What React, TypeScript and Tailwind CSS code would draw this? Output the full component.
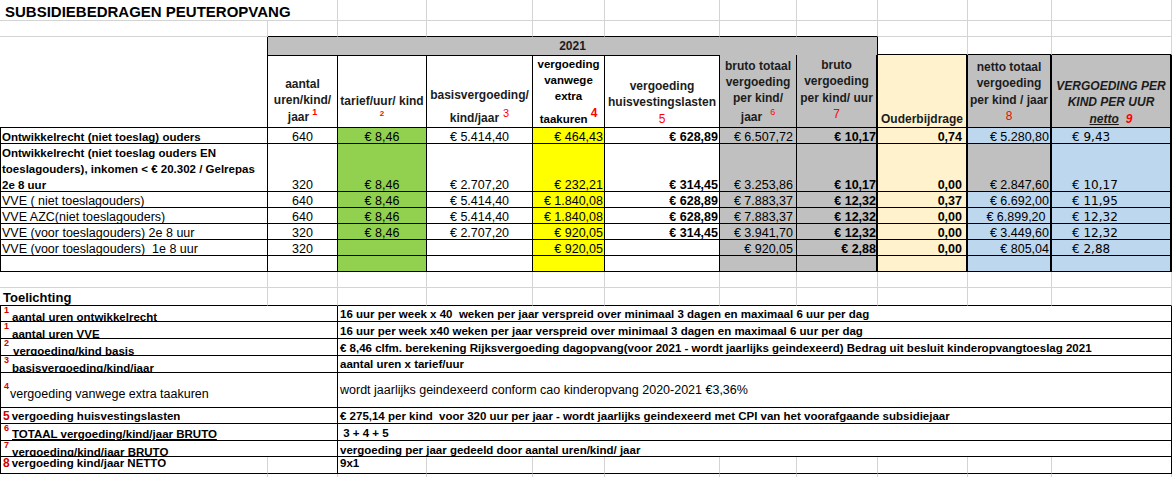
import React from "react";

const COLS =
  "grid grid-cols-[268px_70px_89px_106px_72px_115px_77px_81px_90px_84px_120px]";

const GRID = "border-r border-b border-[#d4d4d4]";
const RED = "text-[#ff0000]";

type DataRow = {
  a: React.ReactNode;
  bold?: boolean;
  h: string;
  jGray?: boolean;
  vals: string[];
};

const dataRows: DataRow[] = [
  {
    a: "Ontwikkelrecht (niet toeslag) ouders",
    bold: true,
    h: "h-[16px]",
    vals: ["640", "€ 8,46", "€ 5.414,40", "€ 464,43", "€ 628,89", "€ 6.507,72", "€ 10,17", "0,74", "€ 5.280,80", "€ 9,43"],
  },
  {
    a: (
      <>
        Ontwikkelrecht (niet toeslag ouders EN
        <br />
        toeslagouders), inkomen &lt; € 20.302 / Gelrepas
        <br />
        2e 8 uur
      </>
    ),
    bold: true,
    h: "h-[48px]",
    jGray: true,
    vals: ["320", "€ 8,46", "€ 2.707,20", "€ 232,21", "€ 314,45", "€ 3.253,86", "€ 10,17", "0,00", "€ 2.847,60", "€ 10,17"],
  },
  {
    a: "VVE ( niet toeslagouders)",
    h: "h-[16px]",
    vals: ["640", "€ 8,46", "€ 5.414,40", "€ 1.840,08", "€ 628,89", "€ 7.883,37", "€ 12,32", "0,37", "€ 6.692,00", "€ 11,95"],
  },
  {
    a: "VVE AZC(niet toeslagouders)",
    h: "h-[16px]",
    vals: ["640", "€ 8,46", "€ 5.414,40", "€ 1.840,08", "€ 628,89", "€ 7.883,37", "€ 12,32", "0,00", "€ 6.899,20\u00a0", "€ 12,32"],
  },
  {
    a: "VVE (voor toeslagouders) 2e 8 uur",
    h: "h-[16px]",
    vals: ["320", "€ 8,46", "€ 2.707,20", "€ 920,05", "€ 314,45", "€ 3.941,70", "€ 12,32", "0,00", "€ 3.449,60", "€ 12,32"],
  },
  {
    a: "VVE (voor toeslagouders)  1e 8 uur",
    h: "h-[16px]",
    vals: ["320", "", "", "€ 920,05", "", "€ 920,05", "€ 2,88", "0,00", "€ 805,04", "€ 2,88"],
  },
  {
    a: "",
    h: "h-[16px]",
    vals: ["", "", "", "", "", "", "", "", "", ""],
  },
];

// per column styles for B..K in the data block
const dataCols = (jGray?: boolean) => [
  "justify-center",
  "justify-center bg-[#92d050]",
  "justify-center",
  "justify-end pr-[1px] bg-[#ffff00]",
  "justify-end pr-[1px] font-bold",
  "justify-end pr-[3px] bg-[#c0c0c0]",
  "justify-end bg-[#c0c0c0] font-bold border-r-2",
  "justify-end pr-[4px] bg-[#fff2cc] font-bold border-r-2",
  jGray
    ? "justify-end pr-[1px] bg-[#c0c0c0] border-r-2"
    : "justify-end pr-[1px] bg-[#bdd7ee] border-r-2",
  "justify-start pl-[20px] bg-[#bdd7ee] border-r-2 font-['DejaVu_Sans',sans-serif] text-[12px]",
];

const Sup = ({ n, cls = "" }: { n: string; cls?: string }) => (
  <span
    className={`self-start ml-[3px] w-[6px] text-[9px] leading-[9px] font-bold text-[#d00000] ${cls}`}
  >
    {n}
  </span>
);

const NoteText = ({ children, cls = "" }: { children: React.ReactNode; cls?: string }) => (
  <span className={`text-[11.5px] font-bold leading-[12px] ${cls}`}>{children}</span>
);

const NoteRow = ({
  h,
  left,
  leftCls,
  right,
  rightCls,
}: {
  h: string;
  left: React.ReactNode;
  leftCls: string;
  right: React.ReactNode;
  rightCls: string;
}) => (
  <div className={`grid grid-cols-[338px_834px] ${h}`}>
    <div
      className={`flex overflow-hidden whitespace-pre border-l border-r border-b border-black ${leftCls}`}
    >
      {left}
    </div>
    <div
      className={`flex overflow-hidden whitespace-pre border-r border-b border-black pl-[2px] ${rightCls}`}
    >
      {right}
    </div>
  </div>
);

export default function App() {
  return (
    <div className="w-[1174px] h-[477px] overflow-hidden bg-white text-black font-['Liberation_Sans',Arial,sans-serif]">
      {/* TITLE */}
      <div className={`${COLS} h-[21px]`}>
        <div className="col-span-2 flex items-end pl-[5px] border-r border-b border-[#d4d4d4] whitespace-nowrap text-[15px] font-bold leading-[17px]">
          SUBSIDIEBEDRAGEN PEUTEROPVANG
        </div>
        {Array.from({ length: 9 }).map((_, i) => (
          <div key={i} className={GRID} />
        ))}
      </div>

      {/* EMPTY ROW */}
      <div className={`${COLS} h-[16px]`}>
        <div className={GRID} />
        {Array.from({ length: 7 }).map((_, i) => (
          <div key={i} className="border-r border-b border-r-[#d4d4d4] border-b-black" />
        ))}
        {Array.from({ length: 3 }).map((_, i) => (
          <div key={i} className={GRID} />
        ))}
      </div>

      {/* 2021 BAND */}
      <div className={`${COLS} h-[18px]`}>
        <div className="border-r border-black" />
        <div className="col-span-7 flex items-center justify-center bg-[#c0c0c0] border-r border-b border-black text-[12px] font-bold text-[#1c1c1c]">
          2021
        </div>
        {Array.from({ length: 3 }).map((_, i) => (
          <div key={i} className="border-r border-b-2 border-r-[#d4d4d4] border-b-black" />
        ))}
      </div>

      {/* HEADER */}
      <div className={`${COLS} h-[73px] text-[12px] font-bold leading-[16.5px] text-[#1c1c1c] whitespace-nowrap`}>
        <div className="border-r border-b border-black" />

        <div className="flex flex-col items-center justify-end pb-[2px] text-center border-r border-b border-black">
          <div>aantal</div>
          <div>uren/kind/</div>
          <div>
            jaar
            <span className={`relative -top-[6px] ml-[3px] text-[9px] leading-none ${RED}`}>1</span>
          </div>
        </div>

        <div className="flex flex-col items-center justify-end pb-[8px] text-center border-r border-b border-black">
          <div>tarief/uur/ kind</div>
          <div className={`text-[8px] leading-[10px] ${RED}`}>2</div>
        </div>

        <div className="flex flex-col items-center justify-end pb-[1px] text-center border-r border-b border-black">
          <div>basisvergoeding/</div>
          <div className="mt-[6.5px]">
            kind/jaar
            <span className={`relative -top-[5px] ml-[4px] text-[11px] leading-none font-normal ${RED}`}>3</span>
          </div>
        </div>

        <div className="flex flex-col items-center justify-end text-center border-r border-b border-black text-[11.5px] leading-[16px] text-black">
          <div>vergoeding</div>
          <div>vanwege</div>
          <div>extra</div>
          <div className="mt-[7px]">
            taakuren
            <span className={`relative -top-[6px] ml-[3px] text-[12px] leading-none ${RED}`}>4</span>
          </div>
        </div>

        <div className="flex flex-col items-center justify-end text-center border-r border-b border-black">
          <div>vergoeding</div>
          <div>huisvestingslasten</div>
          <div className={`font-normal ${RED}`}>5</div>
        </div>

        <div className="flex flex-col items-center justify-end pb-[2px] text-center bg-[#c0c0c0] border-r border-b border-black leading-[16px]">
          <div>bruto totaal</div>
          <div>vergoeding</div>
          <div>per kind/</div>
          <div className="mt-[3px] leading-[16.5px]">
            jaar
            <span className={`relative -top-[6px] ml-[8px] text-[9px] leading-none font-normal ${RED}`}>6</span>
          </div>
        </div>

        <div className="flex flex-col items-center justify-center pb-[3px] text-center bg-[#c0c0c0] border-r-2 border-b border-black">
          <div>bruto</div>
          <div>vergoeding</div>
          <div>per kind/ uur</div>
          <div className={`font-normal ${RED}`}>7</div>
        </div>

        <div className="flex flex-col items-center justify-end text-center bg-[#fff2cc] border-r-2 border-b border-black">
          <div>Ouderbijdrage</div>
        </div>

        <div className="flex flex-col items-center justify-center pt-[1px] text-center bg-[#c0c0c0] border-r-2 border-b border-black">
          <div>netto totaal</div>
          <div>vergoeding</div>
          <div>per kind / jaar</div>
          <div className={`font-normal ${RED}`}>8</div>
        </div>

        <div className="flex flex-col items-center justify-end text-center italic bg-[#c0c0c0] border-r-2 border-b border-black">
          <div>VERGOEDING PER</div>
          <div>KIND PER UUR</div>
          <div>
            <span className="underline">netto</span>
            <span className={`ml-[7px] ${RED}`}>9</span>
          </div>
        </div>
      </div>

      {/* DATA */}
      {dataRows.map((row, r) => (
        <div key={r} className={`${COLS} ${row.h} text-[12.5px]`}>
          <div className="flex items-end overflow-hidden whitespace-pre pl-[1px] border-l border-r border-b border-black">
            <span
              className={
                row.bold
                  ? "text-[11.5px] font-bold leading-[16px] -mb-[2px]"
                  : "leading-[16px] -mb-[2px]"
              }
            >
              {row.a}
            </span>
          </div>
          {dataCols(row.jGray).map((cls, c) => (
            <div
              key={c}
              className={`flex items-end overflow-hidden whitespace-pre border-r border-b border-black ${cls}`}
            >
              <span className="leading-[16px] -mb-[2px]">{row.vals[c]}</span>
            </div>
          ))}
        </div>
      ))}

      {/* EMPTY ROW */}
      <div className={`${COLS} h-[16px]`}>
        {Array.from({ length: 11 }).map((_, i) => (
          <div key={i} className={GRID} />
        ))}
      </div>

      {/* TOELICHTING */}
      <div className={`${COLS} h-[18px]`}>
        <div className="flex items-end pl-[3px] border-r border-b border-r-[#d4d4d4] border-b-black text-[13px] font-bold leading-[14px]">
          Toelichting
        </div>
        {Array.from({ length: 10 }).map((_, i) => (
          <div key={i} className="border-r border-b border-r-[#d4d4d4] border-b-black" />
        ))}
      </div>

      <NoteRow
        h="h-[16px]"
        leftCls="items-end"
        left={
          <>
            <Sup n="1" />
            <NoteText cls="ml-[2px] -mb-[2px]">aantal uren ontwikkelrecht</NoteText>
          </>
        }
        rightCls="items-end pb-[1px]"
        right={
          <NoteText>
            16 uur per week x 40  weken per jaar verspreid over minimaal 3 dagen en maximaal 6 uur per dag
          </NoteText>
        }
      />
      <NoteRow
        h="h-[17px]"
        leftCls="items-end"
        left={
          <>
            <Sup n="1" />
            <NoteText cls="ml-[2px] -mb-[2px]">aantal uren VVE</NoteText>
          </>
        }
        rightCls="items-end pb-[1px]"
        right={
          <NoteText>
            16 uur per week x40 weken per jaar verspreid over minimaal 3 dagen en maximaal 6 uur per dag
          </NoteText>
        }
      />
      <NoteRow
        h="h-[17px]"
        leftCls="items-end"
        left={
          <>
            <Sup n="2" />
            <NoteText cls="ml-[3px] -mb-[2px]">vergoeding/kind basis</NoteText>
          </>
        }
        rightCls="items-end pb-[1px]"
        right={
          <NoteText>
            € 8,46 clfm. berekening Rijksvergoeding dagopvang(voor 2021 - wordt jaarlijks geindexeerd) Bedrag uit besluit kinderopvangtoeslag 2021
          </NoteText>
        }
      />
      <NoteRow
        h="h-[17px]"
        leftCls="items-end"
        left={
          <>
            <Sup n="3" />
            <NoteText cls="ml-[2px] -mb-[2px]">basisvergoeding/kind/jaar</NoteText>
          </>
        }
        rightCls="items-end pb-[2px]"
        right={<NoteText>aantal uren x tarief/uur</NoteText>}
      />
      <NoteRow
        h="h-[35px]"
        leftCls="items-end pb-[5px]"
        left={
          <>
            <Sup n="4" cls="mt-[9px] text-[8px] leading-[8px]" />
            <span className="text-[12.5px] leading-[16px]">vergoeding vanwege extra taakuren</span>
          </>
        }
        rightCls="items-center"
        right={
          <span className="text-[12.5px] leading-[16px]">
            wordt jaarlijks geindexeerd conform cao kinderopvang 2020-2021 €3,36%
          </span>
        }
      />
      <NoteRow
        h="h-[16px]"
        leftCls="items-end pb-[1px]"
        left={
          <NoteText>
            <span className="ml-[2px] mr-[2px] text-[12px] text-[#d00000]">5</span>
            vergoeding huisvestingslasten
          </NoteText>
        }
        rightCls="items-end pb-[1px]"
        right={
          <NoteText>
            € 275,14 per kind  voor 320 uur per jaar - wordt jaarlijks geindexeerd met CPI van het voorafgaande subsidiejaar
          </NoteText>
        }
      />
      <NoteRow
        h="h-[17px]"
        leftCls="items-end"
        left={
          <>
            <Sup n="6" />
            <NoteText cls="ml-[2px] underline underline-offset-[1px]">TOTAAL vergoeding/kind/jaar BRUTO</NoteText>
          </>
        }
        rightCls="items-end pb-[1px]"
        right={<NoteText> 3 + 4 + 5</NoteText>}
      />
      <NoteRow
        h="h-[16px]"
        leftCls="items-end"
        left={
          <>
            <Sup n="7" />
            <NoteText cls="ml-[2px] -mb-[2px]">vergoeding/kind/jaar BRUTO</NoteText>
          </>
        }
        rightCls="items-end"
        right={<NoteText>vergoeding per jaar gedeeld door aantal uren/kind/ jaar</NoteText>}
      />

      {/* LAST NOTE ROW, NOT MERGED */}
      <div className={`${COLS} h-[17px]`}>
        <div className="flex items-start overflow-hidden whitespace-pre border-l border-r border-b border-l-black border-r-[#d4d4d4] border-b-black">
          <NoteText>
            <span className="ml-[2px] mr-[2px] text-[12px] text-[#d00000]">8</span>
            vergoeding kind/jaar NETTO
          </NoteText>
        </div>
        <div className="border-r border-b border-black" />
        <div className="flex items-start whitespace-pre pl-[2px] border-r border-b border-r-[#d4d4d4] border-b-black">
          <NoteText>9x1</NoteText>
        </div>
        {Array.from({ length: 7 }).map((_, i) => (
          <div key={i} className="border-r border-b border-r-[#d4d4d4] border-b-black" />
        ))}
        <div className="border-r border-b border-black" />
      </div>

      {/* REMAINDER */}
      <div className={`${COLS} h-[3px]`}>
        {Array.from({ length: 11 }).map((_, i) => (
          <div key={i} className="border-r border-[#d4d4d4]" />
        ))}
      </div>
    </div>
  );
}
